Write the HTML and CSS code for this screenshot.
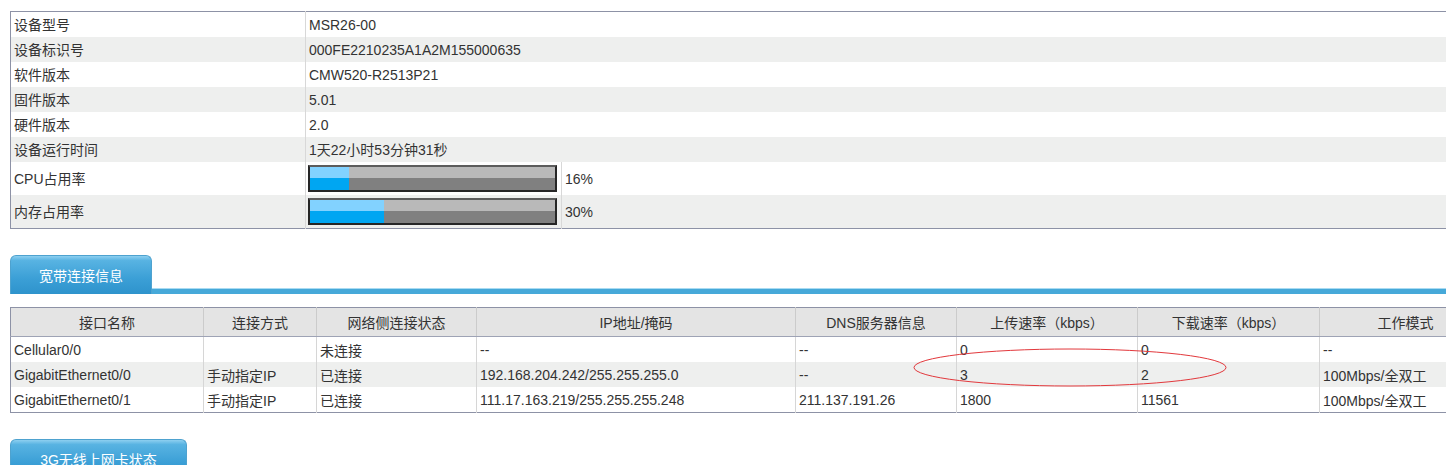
FILE: index.html
```html
<!DOCTYPE html>
<html lang="zh-CN">
<head>
<meta charset="utf-8">
<title>设备信息</title>
<link rel="stylesheet" href="styles.css">
</head>
<body>
<div class="page">
  <table class="info">
    <colgroup><col class="c-label"><col class="c-bar"><col></colgroup>
    <tr><td>设备型号</td><td colspan="2">MSR26-00</td></tr>
    <tr class="alt"><td>设备标识号</td><td colspan="2">000FE2210235A1A2M155000635</td></tr>
    <tr><td>软件版本</td><td colspan="2">CMW520-R2513P21</td></tr>
    <tr class="alt"><td>固件版本</td><td colspan="2">5.01</td></tr>
    <tr><td>硬件版本</td><td colspan="2">2.0</td></tr>
    <tr class="alt"><td>设备运行时间</td><td colspan="2">1天22小时53分钟31秒</td></tr>
    <tr class="prog"><td>CPU占用率</td><td class="barcell"><div class="bar"><div class="fill" style="width:16%"></div></div></td><td class="pct">16%</td></tr>
    <tr class="prog alt"><td>内存占用率</td><td class="barcell"><div class="bar"><div class="fill" style="width:30%"></div></div></td><td class="pct">30%</td></tr>
  </table>

  <div class="tabbar first">
    <div class="tab">宽带连接信息</div>
    <div class="tabline"></div>
  </div>

  <div class="wan-wrap">
    <table class="wan">
      <colgroup>
        <col class="w1"><col class="w2"><col class="w3"><col class="w4">
        <col class="w5"><col class="w6"><col class="w7"><col class="w8">
      </colgroup>
      <thead>
        <tr><th>接口名称</th><th>连接方式</th><th>网络侧连接状态</th><th>IP地址/掩码</th><th>DNS服务器信息</th><th>上传速率（kbps）</th><th>下载速率（kbps）</th><th>工作模式</th></tr>
      </thead>
      <tbody>
        <tr><td>Cellular0/0</td><td></td><td>未连接</td><td>--</td><td>--</td><td>0</td><td>0</td><td>--</td></tr>
        <tr class="alt"><td>GigabitEthernet0/0</td><td>手动指定IP</td><td>已连接</td><td>192.168.204.242/255.255.255.0</td><td>--</td><td>3</td><td>2</td><td>100Mbps/全双工</td></tr>
        <tr><td>GigabitEthernet0/1</td><td>手动指定IP</td><td>已连接</td><td>111.17.163.219/255.255.255.248</td><td>211.137.191.26</td><td>1800</td><td>11561</td><td>100Mbps/全双工</td></tr>
      </tbody>
    </table>
    <svg class="mark" width="320" height="42" viewBox="0 0 320 42"><ellipse cx="158" cy="20.5" rx="156" ry="18.5" fill="none" stroke="#e2383c" stroke-width="1"/></svg>
  </div>

  <div class="tabbar second">
    <div class="tab tab2">3G无线上网卡状态</div>
  </div>
</div>
</body>
</html>
```

FILE: styles.css
```css
html, body {
  margin: 0;
  padding: 0;
  overflow: hidden;
  background: #ffffff;
}
body {
  font-family: "Liberation Sans", Arial, "Noto Sans CJK SC", sans-serif;
  font-size: 14px;
  color: #333333;
}
.page {
  padding: 11px 0 0 10px;
  width: 1500px;
}
table {
  border-collapse: collapse;
  font-size: 14px;
}
.info {
  width: 1450px;
  table-layout: fixed;
  border: 1px solid #8d92a6;
}
.info .c-label { width: 295px; }
.info .c-bar { width: 256px; }
.info td {
  height: 25px;
  padding: 0 3px;
  line-height: 16px;
  vertical-align: middle;
  white-space: nowrap;
}
.info td:first-child { border-right: 1px solid #d8d8d8; }
.info tr.alt td { background: #eeefee; }
.info tr.prog td { height: 33px; }
.info td.barcell {
  padding: 0 2px;
  border-right: 1px solid #d8d8d8;
}
.bar {
  width: 245px;
  height: 23px;
  border: 2px solid #262626;
  border-top-color: #5c5c5c;
  background: linear-gradient(#b9b9b9 0, #b9b9b9 50%, #808080 50%, #808080 100%);
  position: relative;
}
.fill {
  height: 100%;
  background: linear-gradient(#82d2ff 0, #82d2ff 50%, #00a6f2 50%, #00a6f2 100%);
}
.tabbar {
  display: flex;
  align-items: flex-end;
}
.tabbar.first { margin-top: 26px; }
.tab {
  width: 142px;
  height: 39px;
  box-sizing: border-box;
  border-radius: 6px 6px 0 0;
  background: linear-gradient(#8dcff0 0, #58b3e2 12%, #3b9fd6 60%, #2e93cc 100%);
  color: #ffffff;
  font-size: 14px;
  text-align: center;
  line-height: 40px;
  border: 1px solid #4ea2cf;
  border-bottom: none;
}
.tabline {
  flex: 1;
  height: 6px;
  box-sizing: border-box;
  border-top: 1px solid #a9dbf2;
  background: #46a9d9;
}
.wan-wrap {
  position: relative;
  margin-top: 13px;
}
.wan {
  width: 1481px;
  table-layout: fixed;
  border: 1px solid #8d92a6;
}
.wan .w1 { width: 193px; }
.wan .w2 { width: 113px; }
.wan .w3 { width: 160px; }
.wan .w4 { width: 319px; }
.wan .w5 { width: 161px; }
.wan .w6 { width: 181px; }
.wan .w7 { width: 182px; }
.wan .w8 { width: 172px; }
.wan th {
  height: 28px;
  padding: 0;
  font-weight: normal;
  text-align: center;
  background: #e4e4e4;
  border-right: 1px solid #cbcbcb;
  border-bottom: 1px solid #9ea3b5;
  color: #333333;
  white-space: nowrap;
}
.wan td {
  height: 25px;
  padding: 0 3px;
  border-right: 1px solid #d6d6d6;
  white-space: nowrap;
}
.wan tr.alt td { background: #eeefee; }
.mark {
  position: absolute;
  left: 902px;
  top: 40px;
}
.tabbar.second { margin-top: 26px; }
.tab2 {
  width: 177px;
}
```
